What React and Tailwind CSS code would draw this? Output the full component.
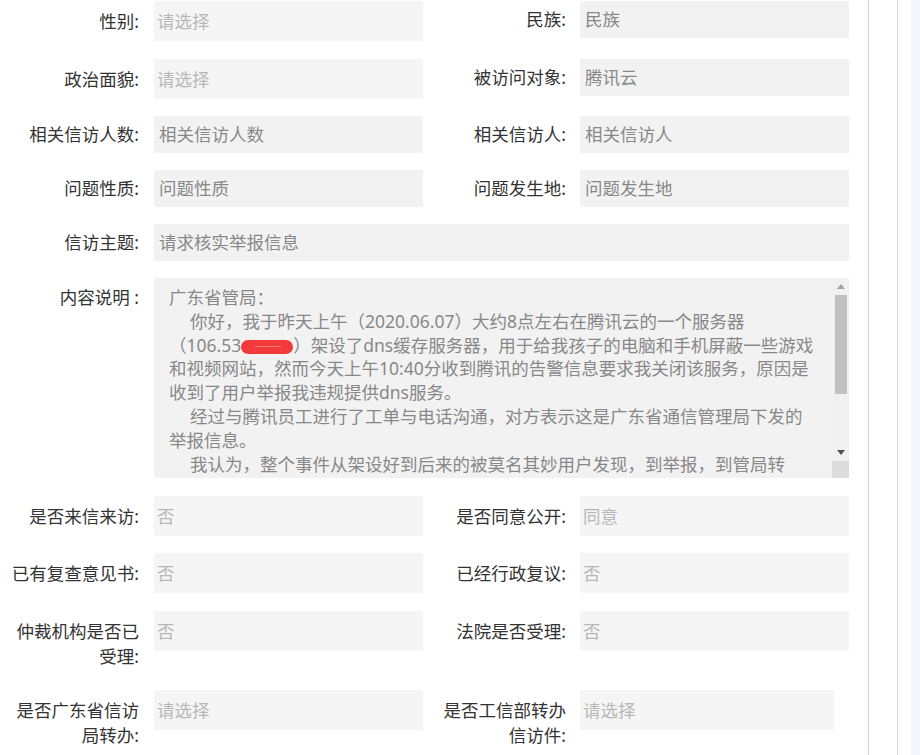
import React from "react";

function Cell({ side, label, kind, value, boxW }) {
  const isSel = kind === "sel";
  const labelPos = side === "l" ? "ml-[9px]" : "ml-[13px]";
  const boxPos = side === "l" ? "ml-[15px]" : "ml-[14px]";
  const pt = isSel ? "pt-[8px]" : "pt-[6px]";
  const box = isSel
    ? "h-[40px] bg-[#f5f5f5] pl-[3px] text-[#b8b8b8]"
    : "h-[37px] bg-[#f2f2f2] pl-[5px] text-[#888888]";
  return (
    <div className="flex items-start">
      <div className={`${labelPos} ${pt} w-[130px] shrink-0 text-right leading-[25px] text-[#333333]`}>
        {label}
      </div>
      <div className={`${boxPos} ${boxW || "w-[269px]"} ${box} flex shrink-0 items-center`}>
        {value}
      </div>
    </div>
  );
}

function Row({ children, mb }) {
  return <div className={`flex items-start ${mb}`}>{children}</div>;
}

function TextLine({ children, indent }) {
  return (
    <div className={`whitespace-nowrap ${indent ? "pl-[21px]" : ""}`}>{children}</div>
  );
}

export default function App() {
  return (
    <div className="flex h-[755px] w-[920px] overflow-hidden bg-white font-['Noto_Sans','Noto_Sans_CJK_SC',sans-serif] text-[17.5px]">
      <div className="h-full w-[869px] shrink-0 border-r border-[#c6d2e3] pt-[1px]">
        <Row mb="mb-[18px]">
          <Cell side="l" label="性别:" kind="sel" value="请选择" />
          <Cell side="r" label="民族:" kind="inp" value="民族" />
        </Row>
        <Row mb="mb-[17px]">
          <Cell side="l" label="政治面貌:" kind="sel" value="请选择" />
          <Cell side="r" label="被访问对象:" kind="inp" value="腾讯云" />
        </Row>
        <Row mb="mb-[17px]">
          <Cell side="l" label="相关信访人数:" kind="inp" value="相关信访人数" />
          <Cell side="r" label="相关信访人:" kind="inp" value="相关信访人" />
        </Row>
        <Row mb="mb-[17px]">
          <Cell side="l" label="问题性质:" kind="inp" value="问题性质" />
          <Cell side="r" label="问题发生地:" kind="inp" value="问题发生地" />
        </Row>
        <Row mb="mb-[17px]">
          <Cell side="l" label="信访主题:" kind="inp" value="请求核实举报信息" boxW="w-[695px]" />
        </Row>

        {/* 内容说明 */}
        <div className="mb-[18px] flex items-start">
          <div className="ml-[9px] w-[130px] shrink-0 pt-[7px] text-right leading-[25px] text-[#333333]">
            内容说明 :
          </div>
          <div className="ml-[15px] flex h-[200px] w-[695px] shrink-0 bg-[#f2f2f2]">
            <div className="w-[678px] overflow-hidden pl-[15px] pt-[8px] leading-[23.8px] text-[#888888]">
              <TextLine>广东省管局：</TextLine>
              <TextLine indent>你好，我于昨天上午（2020.06.07）大约8点左右在腾讯云的一个服务器</TextLine>
              <TextLine>
                （106.53
                <span className="relative inline-block h-[14px] w-[52px] rounded-full bg-[#f23a3a] align-middle">
                  <span className="absolute left-[14px] top-[6px] h-[1px] w-[26px] bg-[#f87a7a]" />
                </span>
                ）架设了dns缓存服务器，用于给我孩子的电脑和手机屏蔽一些游戏
              </TextLine>
              <TextLine>和视频网站，然而今天上午10:40分收到腾讯的告警信息要求我关闭该服务，原因是</TextLine>
              <TextLine>收到了用户举报我违规提供dns服务。</TextLine>
              <TextLine indent>经过与腾讯员工进行了工单与电话沟通，对方表示这是广东省通信管理局下发的</TextLine>
              <TextLine>举报信息。</TextLine>
              <TextLine indent>我认为，整个事件从架设好到后来的被莫名其妙用户发现，到举报，到管局转</TextLine>
            </div>
            {/* scrollbar */}
            <div className="flex w-[17px] shrink-0 flex-col bg-[#f1f1f1]">
              <div className="flex h-[17px] items-center justify-center">
                <svg width="8" height="5" viewBox="0 0 8 5">
                  <path d="M0 5 L4 0 L8 5 Z" fill="#a3a3a3" />
                </svg>
              </div>
              <div className="ml-[3px] h-[99px] w-[12px] bg-[#c1c1c1]" />
              <div className="flex-1" />
              <div className="flex h-[17px] items-center justify-center">
                <svg width="8" height="5" viewBox="0 0 8 5">
                  <path d="M0 0 L8 0 L4 5 Z" fill="#505050" />
                </svg>
              </div>
              <div className="h-[17px] bg-[#dcdcdc]" />
            </div>
          </div>
        </div>

        <Row mb="mb-[17px]">
          <Cell side="l" label="是否来信来访:" kind="sel" value="否" />
          <Cell side="r" label="是否同意公开:" kind="sel" value="同意" />
        </Row>
        <Row mb="mb-[18px]">
          <Cell side="l" label="已有复查意见书:" kind="sel" value="否" />
          <Cell side="r" label="已经行政复议:" kind="sel" value="否" />
        </Row>
        <Row mb="mb-[21px]">
          <Cell side="l" label="仲裁机构是否已受理:" kind="sel" value="否" />
          <Cell side="r" label="法院是否受理:" kind="sel" value="否" />
        </Row>
        <Row mb="mb-[0px]">
          <Cell side="l" label="是否广东省信访局转办:" kind="sel" value="请选择" />
          <Cell side="r" label="是否工信部转办信访件:" kind="sel" value="请选择" boxW="w-[254px]" />
        </Row>
      </div>
      <div className="w-[28px] shrink-0" />
      <div className="w-[1px] shrink-0 bg-[#d6d6d6]" />
      <div className="w-[13px] shrink-0" />
      <div className="flex-1 bg-[#f3f7fd]" />
    </div>
  );
}
